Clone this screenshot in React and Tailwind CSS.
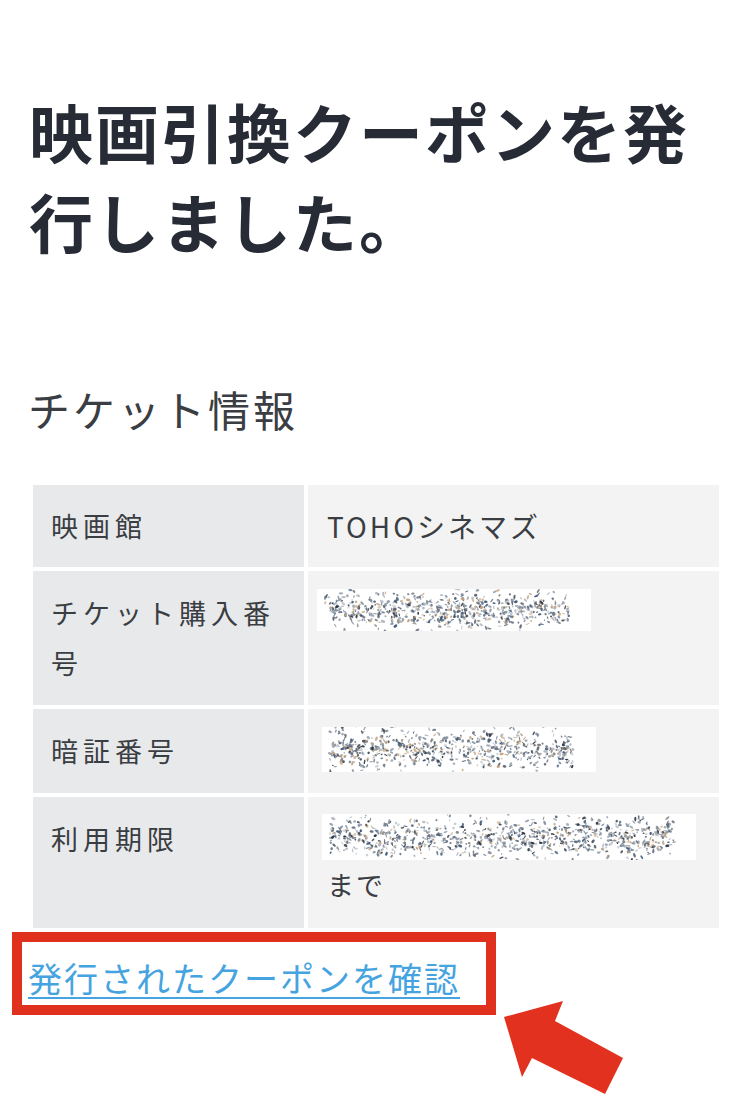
import React from "react";

const FONT = { fontFamily: '"Noto Sans CJK JP", "Noto Sans", sans-serif' };

// deterministic speckle for the redacted values
function makeDots(seed, w, h, n) {
  let s = seed;
  const rnd = () => {
    s = (s * 16807) % 2147483647;
    return (s - 1) / 2147483646;
  };
  const colors = ["#2b3340", "#56606e", "#8a94a3", "#3d5878", "#a6aeb8", "#6b7685", "#c2a27a"];
  const dots = [];
  for (let i = 0; i < n; i++) {
    const x = 8 + rnd() * (w - 30);
    const y = h / 2 + (rnd() + rnd() + rnd() - 1.5) * (h * 0.42);
    dots.push({
      x,
      y,
      rx: 0.8 + rnd() * 1.6,
      ry: 0.5 + rnd() * 0.9,
      r: rnd() * 180,
      c: colors[Math.floor(rnd() * colors.length)],
      o: 0.5 + rnd() * 0.5,
    });
  }
  return dots;
}

const Redacted = ({ w, h, seed }) => {
  const dots = makeDots(seed, w, h, Math.round(w * 2.4));
  return (
    <div className="bg-white" style={{ width: w, height: h }}>
      <svg width={w} height={h}>
        {dots.map((d, i) => (
          <ellipse
            key={i}
            cx={d.x}
            cy={d.y}
            rx={d.rx}
            ry={d.ry}
            fill={d.c}
            opacity={d.o}
            transform={`rotate(${d.r} ${d.x} ${d.y})`}
          />
        ))}
      </svg>
    </div>
  );
};

const Label = ({ children, className = "pt-4 pb-4" }) => (
  <div className={`bg-[#e8e9eb] pl-[18px] pr-[16px] text-[27px] leading-[50px] tracking-[5px] text-[#3a3d42] ${className}`}>
    {children}
  </div>
);

export default function App() {
  return (
    <div className="relative min-h-[1102px] w-[742px] overflow-hidden bg-white" style={FONT}>
      <h1 className="pl-[29px] pr-4 pt-[85px] text-[64px] font-bold leading-[90px] tracking-[2px] text-[#262b35]">
        映画引換クーポンを発行しました。
      </h1>

      <h2 className="mt-[114px] pl-[28px] text-[42px] font-normal leading-[60px] tracking-[3px] text-[#3a3d42]">
        チケット情報
      </h2>

      <div className="mt-[46px] ml-[33px] grid w-[686px] grid-cols-[271px_1fr] gap-1">
        <Label>映画館</Label>
        <div className="bg-[#f3f3f3] pl-[19px] py-4 text-[28px] leading-[50px] tracking-[3px] text-[#3a3d42]">
          TOHOシネマズ
        </div>

        <Label className="pt-[17px] pb-[17px]">チケット購入番号</Label>
        <div className="bg-[#f3f3f3] pl-[9px] pt-[18px]">
          <Redacted w={274} h={42} seed={11} />
        </div>

        <Label className="pt-[17px] pb-[17px]">暗証番号</Label>
        <div className="bg-[#f3f3f3] pl-[14px] pt-[18px]">
          <Redacted w={274} h={45} seed={29} />
        </div>

        <Label className="pt-[17px] pb-[17px]">利用期限</Label>
        <div className="bg-[#f3f3f3] pl-[14px] pt-[17px] pb-[18px]">
          <Redacted w={374} h={46} seed={53} />
          <div className="pl-[5px] text-[27px] leading-[50px] tracking-[2px] text-[#3a3d42]">まで</div>
        </div>
      </div>

      <div className="mt-1 ml-[12px] w-[484px] h-[83px] border-[10px] border-[#e0301e] bg-white pl-[6px] pt-[14px]">
        <a
          href="#"
          className="text-[34px] leading-[44px] tracking-[2px] text-[#45a4e0] underline decoration-2 underline-offset-[5px]"
        >
          発行されたクーポンを確認
        </a>
      </div>

      <svg className="absolute left-0 top-0" width="742" height="1102" viewBox="0 0 742 1102">
        <polygon
          points="504,1017 563,1001 555,1021 623,1058 605,1094 532,1058 522,1077"
          fill="#e3311f"
        />
      </svg>
    </div>
  );
}
